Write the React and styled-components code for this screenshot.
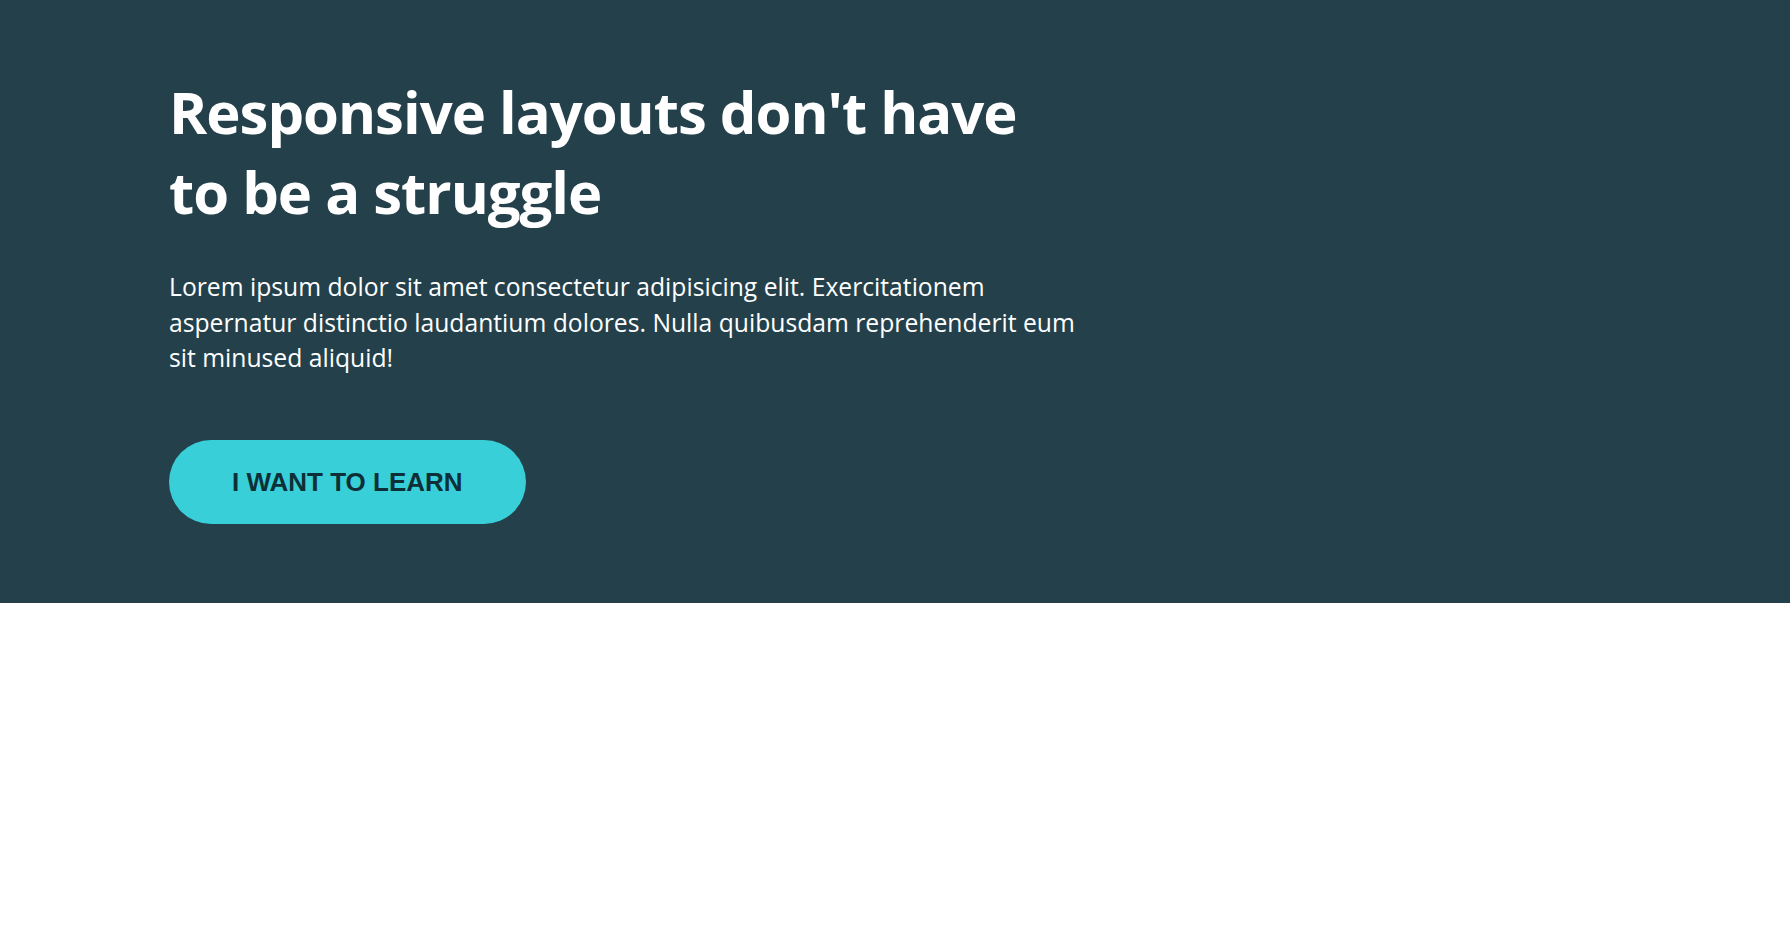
import React from "react";
import styled, { createGlobalStyle } from "styled-components";

const GlobalStyle = createGlobalStyle`
  * {
    box-sizing: border-box;
  }
  body {
    margin: 0;
    background: #ffffff;
    font-family: "Open Sans", "Noto Sans", sans-serif;
  }
`;

const Hero = styled.section`
  background: #24414b;
  color: #ffffff;
  padding: 72px 169px 79px;
`;

const Content = styled.div`
  max-width: 930px;
`;

const Title = styled.h1`
  margin: 0;
  font-size: 58px;
  line-height: 80px;
  font-weight: 700;
  letter-spacing: -1px;
  max-width: 880px;
`;

const Lead = styled.p`
  margin: 37px 0 64px;
  font-size: 24.7px;
  line-height: 35.5px;
`;

const LearnButton = styled.button`
  display: inline-block;
  border: none;
  border-radius: 999px;
  background: #38cfd9;
  color: #0d2f37;
  font-family: "Liberation Sans", Arial, sans-serif;
  font-weight: 700;
  font-size: 26px;
  line-height: 30px;
  padding: 27px 63px;
  cursor: pointer;
`;

const App = () => {
  return (
    <>
      <GlobalStyle />
      <Hero>
        <Content>
          <Title>Responsive layouts don't have to be a struggle</Title>
          <Lead>
            Lorem ipsum dolor sit amet consectetur adipisicing elit. Exercitationem
            aspernatur distinctio laudantium dolores. Nulla quibusdam reprehenderit
            eum sit minused aliquid!
          </Lead>
          <LearnButton>I WANT TO LEARN</LearnButton>
        </Content>
      </Hero>
    </>
  );
};

export default App;
